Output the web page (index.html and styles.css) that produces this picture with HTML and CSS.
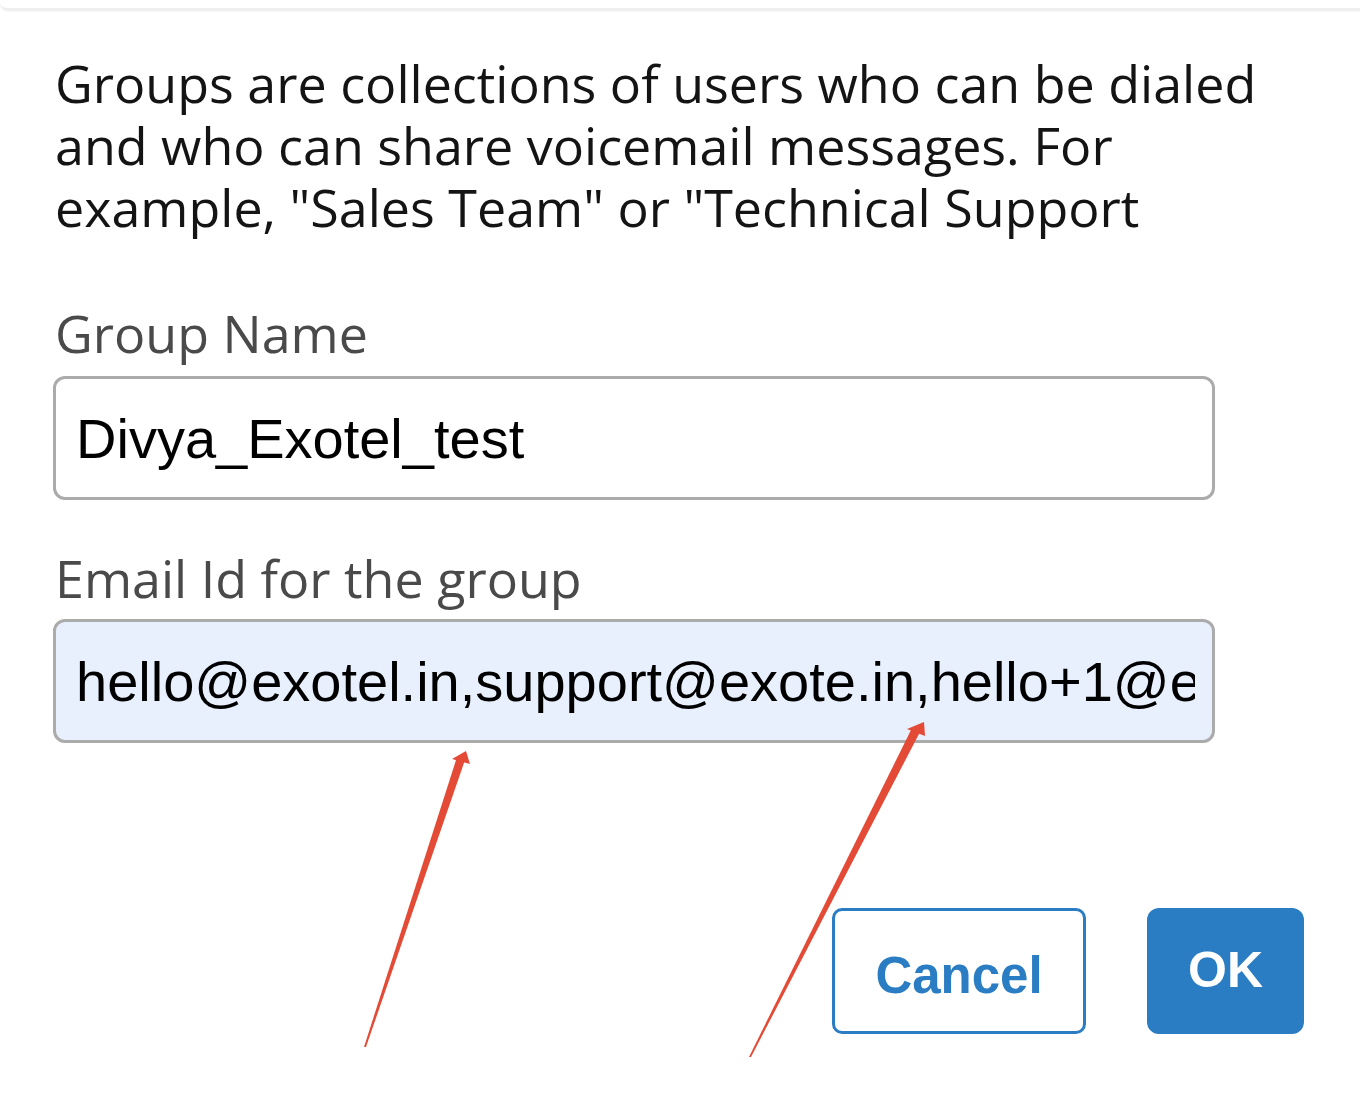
FILE: index.html
```html
<!DOCTYPE html>
<html lang="en">
<head>
<meta charset="utf-8">
<title>Group</title>
<link rel="stylesheet" href="styles.css">
</head>
<body>
<div class="prev-card"></div>
<main class="dialog">
  <p class="desc">Groups are collections of users who can be dialed and who can share voicemail messages. For example, "Sales Team" or "Technical Support</p>
  <label class="label" for="gname">Group Name</label>
  <input class="field" id="gname" type="text" value="Divya_Exotel_test">
  <label class="label label-email" for="gemail">Email Id for the group</label>
  <input class="field field-filled" id="gemail" type="text" value="hello@exotel.in,support@exote.in,hello+1@exotel.in">
  <div class="actions">
    <button class="btn btn-cancel" type="button">Cancel</button>
    <button class="btn btn-ok" type="button">OK</button>
  </div>
</main>
<svg class="annotations" width="1360" height="1100" viewBox="0 0 1360 1100" aria-hidden="true">
  <polygon fill="#e34b36" points="364,1047 457,757 465,760 366,1047"/>
  <polygon fill="#e34b36" points="466,751 452,759 470,764"/>
  <polygon fill="#e34b36" points="749,1057 912,728 920,732 751,1057"/>
  <polygon fill="#e34b36" points="924,722 907,729 925,736"/>
</svg>
</body>
</html>
```

FILE: styles.css
```css
html, body {
  margin: 0;
  padding: 0;
  background: #ffffff;
}

body {
  width: 1360px;
  height: 1100px;
  position: relative;
  overflow: hidden;
  font-family: "Open Sans", "Noto Sans", sans-serif;
}

.prev-card {
  height: 8px;
  border-bottom: 3px solid #efefef;
  border-bottom-left-radius: 8px;
  box-shadow: 0 1px 2px rgba(0, 0, 0, 0.03);
}

.dialog {
  display: flex;
  flex-direction: column;
  align-items: flex-start;
  padding: 0 56px 0 53px;
}

.desc {
  margin: 41px 0 0 2px;
  width: 1240px;
  font-size: 52px;
  line-height: 62px;
  color: #141414;
}

.label {
  display: block;
  margin: 65px 0 0 2px;
  font-size: 52px;
  line-height: 60px;
  color: #4a4a4a;
}

.label-email {
  margin-top: 48px;
}

.field {
  box-sizing: border-box;
  width: 1162px;
  height: 124px;
  margin: 13px 0 0 0;
  padding: 0 17px 0 20px;
  border: 3px solid #ababab;
  border-radius: 12px;
  background: #ffffff;
  font-family: "Liberation Sans", Arial, sans-serif;
  font-size: 56px;
  color: #000000;
  outline: none;
}

.field-filled {
  background: #e8f0fe;
  margin-top: 11px;
}

.actions {
  align-self: stretch;
  display: flex;
  justify-content: flex-end;
  gap: 61px;
  margin-top: 165px;
}

.btn {
  box-sizing: border-box;
  height: 126px;
  border-radius: 12px;
  font-family: "Liberation Sans", Arial, sans-serif;
  font-weight: bold;
  font-size: 51px;
  cursor: pointer;
}

.btn-cancel {
  width: 254px;
  border: 3px solid #2b7dc3;
  border-radius: 10px;
  background: #ffffff;
  color: #2b7dc3;
  padding: 8px 0 0 0;
}

.btn-ok {
  width: 157px;
  border: none;
  background: #2a7dc2;
  color: #ffffff;
  font-size: 50px;
  padding: 0 0 2px 0;
}

.annotations {
  position: absolute;
  left: 0;
  top: 0;
  pointer-events: none;
}
```
